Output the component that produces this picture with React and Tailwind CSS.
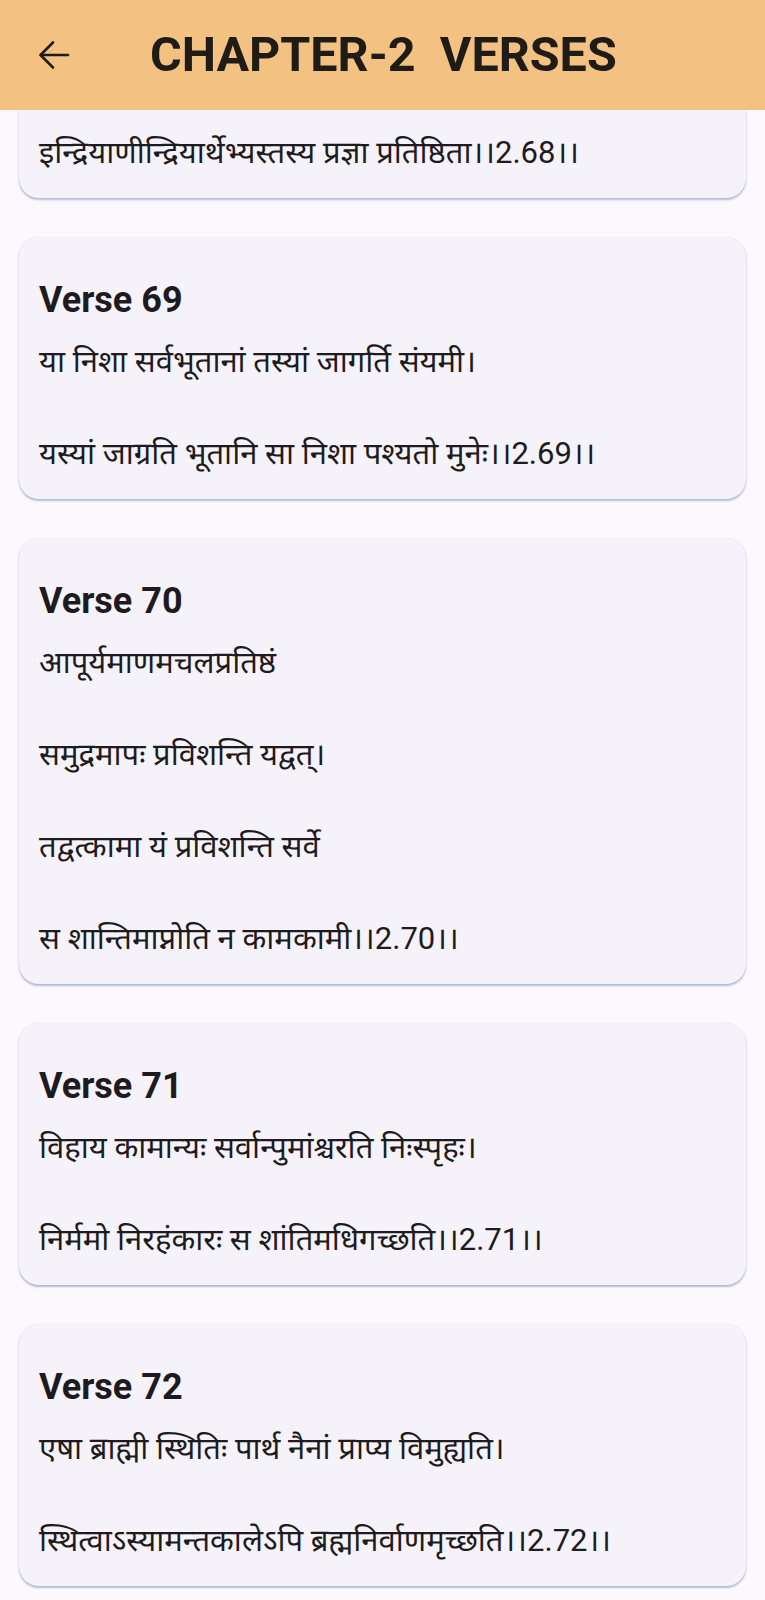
import React from 'react';

const verses = [
  {
    num: 69,
    lines: [
      'या निशा सर्वभूतानां तस्यां जागर्ति संयमी।',
      'यस्यां जाग्रति भूतानि सा निशा पश्यतो मुनेः।।2.69।।',
    ],
  },
  {
    num: 70,
    lines: [
      'आपूर्यमाणमचलप्रतिष्ठं',
      'समुद्रमापः प्रविशन्ति यद्वत्।',
      'तद्वत्कामा यं प्रविशन्ति सर्वे',
      'स शान्तिमाप्नोति न कामकामी।।2.70।।',
    ],
  },
  {
    num: 71,
    lines: [
      'विहाय कामान्यः सर्वान्पुमांश्चरति निःस्पृहः।',
      'निर्ममो निरहंकारः स शांतिमधिगच्छति।।2.71।।',
    ],
  },
  {
    num: 72,
    lines: [
      'एषा ब्राह्मी स्थितिः पार्थ नैनां प्राप्य विमुह्यति।',
      'स्थित्वाऽस्यामन्तकालेऽपि ब्रह्मनिर्वाणमृच्छति।।2.72।।',
    ],
  },
];

const BackArrow = () => (
  <svg width="32" height="30" viewBox="0 0 32 30" fill="none" stroke="#1f1b16" strokeWidth="2.6" strokeLinecap="round" strokeLinejoin="round">
    <path d="M30 15H3" />
    <path d="M15 2.5 2.5 15 15 27.5" />
  </svg>
);

const cardShadow = 'shadow-[0_2px_2px_rgba(90,120,170,0.45),0_0_1px_rgba(90,110,150,0.25)]';
const lineText = "text-[31px] leading-[46px] text-[#1d1b20] font-['Roboto','Noto_Sans_Devanagari','Noto_Sans',sans-serif] whitespace-nowrap";

const VerseCard = ({ verse }) => (
  <div className={`bg-[#f5f2f9] rounded-[20px] ${cardShadow} px-5 pt-[42px] pb-[22px]`}>
    <h2 className="text-[36px] leading-[43px] font-bold text-[#1d1b20] font-['Roboto',sans-serif]">
      Verse {verse.num}
    </h2>
    <div className="mt-[17px] flex flex-col gap-[46px]">
      {verse.lines.map((line, i) => (
        <div key={i} className={lineText}>{line}</div>
      ))}
    </div>
  </div>
);

export default function App() {
  return (
    <div className="w-[765px] h-[1600px] bg-[#fdf7fe] flex flex-col overflow-hidden">
      {/* App bar */}
      <header className="h-[110px] shrink-0 bg-[#f3c283] flex items-center pl-[38px]">
        <BackArrow />
        <h1 className="ml-[80px] text-[48.5px] font-bold text-[#1f1b16] font-['Roboto',sans-serif] whitespace-pre">
          CHAPTER-2  VERSES
        </h1>
      </header>

      {/* List, scrolled so verse 68 is partly under the app bar */}
      <main className="flex-1 overflow-hidden px-[19px] flex flex-col gap-[39px]">
        <div className={`bg-[#f5f2f9] rounded-b-[20px] ${cardShadow} px-5 pt-[20px] pb-[22px]`}>
          <div className={lineText}>इन्द्रियाणीन्द्रियार्थेभ्यस्तस्य प्रज्ञा प्रतिष्ठिता।।2.68।।</div>
        </div>
        {verses.map((v) => (
          <VerseCard key={v.num} verse={v} />
        ))}
      </main>
    </div>
  );
}
